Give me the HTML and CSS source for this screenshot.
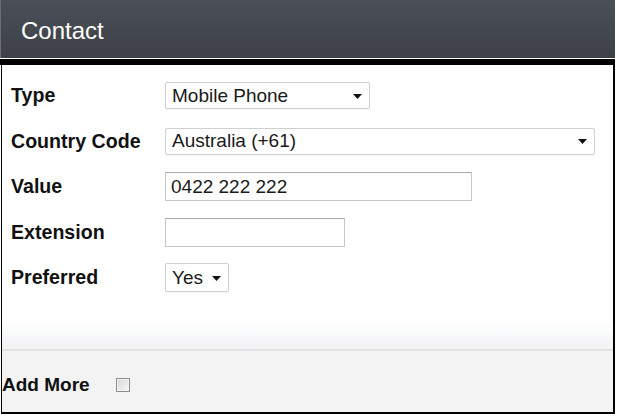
FILE: index.html
```html
<!DOCTYPE html>
<html lang="en">
<head>
<meta charset="utf-8">
<title>Contact</title>
<link rel="stylesheet" href="styles.css">
</head>
<body>
<div class="panel">
  <div class="panel-head">Contact</div>
  <div class="panel-rule"></div>
  <div class="frame">
    <div class="panel-body">
      <div class="form-grid">
        <label class="lbl">Type</label>
        <div class="ctl"><div class="select sel-type"><span>Mobile Phone</span><svg class="caret" width="9" height="5" viewBox="0 0 9 5"><path d="M0 0H9L4.5 5Z" fill="#111"/></svg></div></div>

        <label class="lbl">Country Code</label>
        <div class="ctl"><div class="select sel-country"><span>Australia (+61)</span><svg class="caret" width="9" height="5" viewBox="0 0 9 5"><path d="M0 0H9L4.5 5Z" fill="#111"/></svg></div></div>

        <label class="lbl">Value</label>
        <div class="ctl"><div class="input inp-value">0422 222 222</div></div>

        <label class="lbl">Extension</label>
        <div class="ctl"><div class="input inp-ext"></div></div>

        <label class="lbl">Preferred</label>
        <div class="ctl"><div class="select sel-pref"><span>Yes</span><svg class="caret" width="9" height="5" viewBox="0 0 9 5"><path d="M0 0H9L4.5 5Z" fill="#111"/></svg></div></div>
      </div>
    </div>
    <div class="panel-foot">
      <span class="foot-label">Add More</span>
      <span class="checkbox"></span>
    </div>
  </div>
</div>
</body>
</html>
```

FILE: styles.css
```css
html, body {
  margin: 0;
  padding: 0;
  background: #fff;
}
body {
  font-family: "Liberation Sans", Arial, sans-serif;
  color: #111;
}
.panel {
  width: 615px;
}
.panel-head {
  height: 58px;
  box-sizing: border-box;
  padding: 3px 0 0 20px;
  display: flex;
  align-items: center;
  font-size: 24px;
  color: #fff;
  background: linear-gradient(#4b5058, #3d4046);
  border-left: 1px solid #6a6e75;
}
.panel-rule {
  height: 6px;
  border-top: 1px solid #fff;
  background: #000;
}
.frame {
  margin-left: 1px;
  width: 614px;
  box-sizing: border-box;
  border-left: 1px solid #000;
  border-right: 2px solid #000;
  border-bottom: 2px solid #000;
}
.panel-body {
  height: 286px;
  box-sizing: border-box;
  padding: 8px 0 0 9px;
  background: linear-gradient(#fff 255px, #f0f1f4 286px);
  border-bottom: 2px solid #e3e3e3;
}
.form-grid {
  display: grid;
  grid-template-columns: 154px 1fr;
  grid-auto-rows: 45.5px;
  align-items: center;
}
.lbl {
  font-weight: bold;
  font-size: 19.6px;
  color: #111;
}
.ctl {
  display: flex;
  align-items: center;
}
.select, .input {
  box-sizing: border-box;
  font-size: 19px;
  color: #1a1a1a;
  background: #fff;
  display: flex;
  align-items: center;
  padding-left: 6px;
}
.select {
  height: 27px;
  border: 1px solid #cfcfcf;
  border-radius: 2px;
  justify-content: space-between;
  padding-right: 7px;
  box-shadow: 0 1px 1px rgba(0,0,0,0.04);
}
.input {
  height: 29px;
  border: 1px solid #c6c6c6;
  border-top-color: #a8a8a8;
  border-radius: 1px;
  padding-left: 5px;
}
.sel-type { width: 205px; }
.sel-country { width: 430px; }
.sel-pref { width: 64px; height: 29px; }
.inp-value { width: 307px; }
.inp-ext { width: 180px; }
.caret {
  display: block;
  flex: none;
  margin-top: 1px;
}
.panel-foot {
  height: 61px;
  background: #f3f3f3;
  display: flex;
  align-items: center;
  padding-left: 0;
  gap: 26px;
}
.foot-label {
  font-weight: bold;
  font-size: 19px;
  color: #111;
  margin-top: 7px;
}
.checkbox {
  width: 14px;
  height: 14px;
  box-sizing: border-box;
  border: 1px solid #8e8e8e;
  background: linear-gradient(135deg, #d6d6d6, #f7f7f7);
  box-shadow: inset 0 0 0 1px #f2f2f2;
  margin-top: 6px;
}
```
